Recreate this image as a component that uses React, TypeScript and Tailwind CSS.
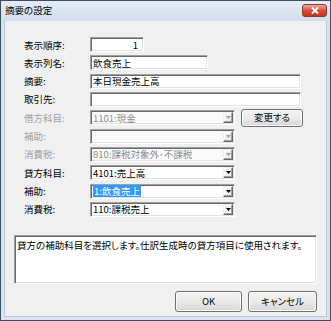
import React from "react";

const font = "[font-family:'Noto_Sans_CJK_JP','Noto_Sans',sans-serif] [font-feature-settings:'palt']";

function Sunken({ w, children, bg = "bg-white", right = false }: { w: string; children?: React.ReactNode; bg?: string; right?: boolean }) {
  return (
    <div
      className={`${w} ${bg} flex h-[15px] items-center border border-t-[#a0a0a0] border-l-[#a0a0a0] border-b-white border-r-white shadow-[inset_1px_1px_0_#696969,inset_-1px_-1px_0_#e3e3e3] px-[2px] text-[9.5px] leading-[12px] text-black ${right ? "justify-end pr-[5px]" : ""}`}
    >
      {children}
    </div>
  );
}

function Combo({ text, disabled = false, selected = false }: { text: string; disabled?: boolean; selected?: boolean }) {
  return (
    <div
      className={`relative flex h-[15px] w-[145px] items-center border border-t-[#a0a0a0] border-l-[#a0a0a0] border-b-white border-r-white shadow-[inset_1px_1px_0_#696969,inset_-1px_-1px_0_#e3e3e3] pl-[2px] text-[9.5px] leading-[12px] ${disabled ? "bg-[#fafafa] text-[#8d8d8d]" : "bg-white text-black"}`}
    >
      <span className={`whitespace-nowrap ${selected ? "bg-[#3399ff] px-[1px] text-white" : ""}`}>{text}</span>
      <div className="absolute right-[1px] top-[1px] bottom-[1px] flex w-[10px] items-center justify-center border border-t-[#f0f0f0] border-l-[#f0f0f0] border-b-[#696969] border-r-[#696969] bg-[#f0f0f0] shadow-[inset_-1px_-1px_0_#a0a0a0,inset_1px_1px_0_#ffffff]">
        <svg width="5" height="3" viewBox="0 0 5 3">
          <path d="M0 0 L5 0 L2.5 3 Z" fill={disabled ? "#a0a0a0" : "#000"} />
        </svg>
      </div>
    </div>
  );
}

function Btn({ label, w, h }: { label: string; w: string; h: string }) {
  return (
    <div
      className={`${w} ${h} flex items-center justify-center rounded-[3px] border border-[#707070] bg-gradient-to-b from-[#f2f2f2] via-[#ebebeb] to-[#d6d6d6] shadow-[inset_0_0_0_1px_#fcfcfc] text-[9.5px] leading-none text-black`}
    >
      {label}
    </div>
  );
}

function Row({ label, disabled = false, children }: { label: string; disabled?: boolean; children: React.ReactNode }) {
  return (
    <div className="flex h-[15px] items-center">
      <div className={`w-[66px] pl-[19px] box-content text-[9.5px] leading-[12px] whitespace-nowrap ${disabled ? "text-[#a0a0a0]" : "text-black"}`}>{label}</div>
      {children}
    </div>
  );
}

export default function App() {
  return (
    <div className={`${font} flex h-[321px] w-[331px] flex-col border border-[#3e4f63] bg-[#dae4f0]`}>
      <div className="relative flex h-[20px] items-center bg-gradient-to-b from-[#e4ecf6] to-[#d2deec] pl-[4px]">
        <span className="text-[9.5px] leading-none text-black">摘要の設定</span>
        <div className="absolute right-[3px] top-[3px] flex h-[13px] w-[25px] items-center justify-center rounded-[3px] border border-[#8a3b2e] bg-gradient-to-b from-[#e9a99b] via-[#d2503a] to-[#c2311a]">
          <svg width="8" height="7" viewBox="0 0 8 7">
            <path d="M1 0.5 L7 6.5 M7 0.5 L1 6.5" stroke="#fff" strokeWidth="1.8" />
          </svg>
        </div>
      </div>
      <div className="mx-[4px] mb-[4px] flex flex-1 flex-col bg-[#f0f0f0] shadow-[0_0_0_1px_#b9c7d8]">
        <div className="mt-[16px] flex flex-col gap-[3.33px]">
          <Row label="表示順序:">
            <Sunken w="w-[54px]" right>1</Sunken>
          </Row>
          <Row label="表示列名:">
            <Sunken w="w-[118px]">飲食売上</Sunken>
          </Row>
          <Row label="摘要:">
            <Sunken w="w-[211px]">本日現金売上高</Sunken>
          </Row>
          <Row label="取引先:">
            <Sunken w="w-[211px]" />
          </Row>
          <Row label="借方科目:" disabled>
            <Combo text="1101:現金" disabled />
            <div className="ml-[6px]">
              <Btn label="変更する" w="w-[62px]" h="h-[18px]" />
            </div>
          </Row>
          <Row label="補助:" disabled>
            <Combo text="" disabled />
          </Row>
          <Row label="消費税:" disabled>
            <Combo text="810:課税対象外･不課税" disabled />
          </Row>
          <Row label="貸方科目:">
            <Combo text="4101:売上高" />
          </Row>
          <Row label="補助:">
            <Combo text="1:飲食売上" selected />
          </Row>
          <Row label="消費税:">
            <Combo text="110:課税売上" />
          </Row>
        </div>
        <div className="mx-[9px] mt-[18px] h-[49px] whitespace-nowrap border border-t-[#a0a0a0] border-l-[#a0a0a0] border-b-white border-r-white bg-white px-[2px] pt-[3px] text-[9.5px] leading-[12px] shadow-[inset_1px_1px_0_#696969,inset_-1px_-1px_0_#e3e3e3]">
          貸方の補助科目を選択します。仕訳生成時の貸方項目に使用されます。
        </div>
        <div className="mt-[7px] flex justify-end gap-[6px] pr-[9px]">
          <Btn label="OK" w="w-[67px]" h="h-[21px]" />
          <Btn label="キャンセル" w="w-[69px]" h="h-[21px]" />
        </div>
      </div>
    </div>
  );
}
